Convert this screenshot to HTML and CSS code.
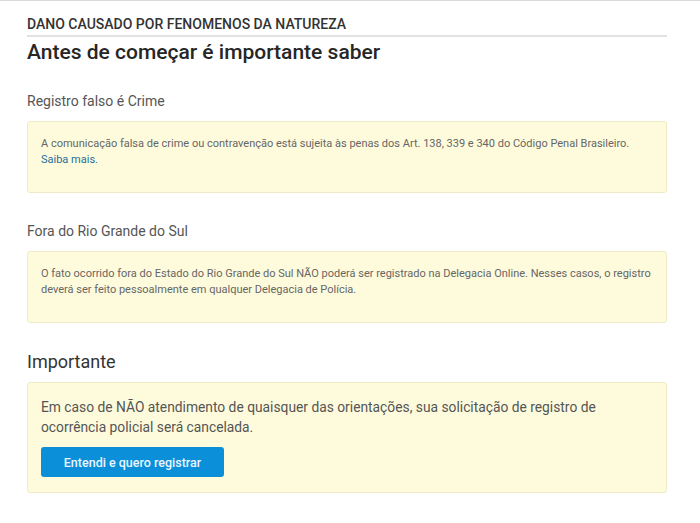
FILE: index.html
```html
<!DOCTYPE html>
<html lang="pt-BR">
<head>
<meta charset="utf-8">
<title>Dano causado por fenomenos da natureza</title>
<link rel="stylesheet" href="styles.css">
</head>
<body>
<div class="page">
  <div class="topbar"></div>
  <main class="content">
    <h2 class="kicker">DANO CAUSADO POR FENOMENOS DA NATUREZA</h2>
    <h1 class="title">Antes de começar é importante saber</h1>

    <section class="section">
      <h3 class="section-title">Registro falso é Crime</h3>
      <div class="notice small">
        <p>A comunicação falsa de crime ou contravenção está sujeita às penas dos Art. 138, 339 e 340 do Código Penal Brasileiro.<br><a class="link" href="#">Saiba mais.</a></p>
      </div>
    </section>

    <section class="section">
      <h3 class="section-title">Fora do Rio Grande do Sul</h3>
      <div class="notice small">
        <p>O fato ocorrido fora do Estado do Rio Grande do Sul NÃO poderá ser registrado na Delegacia Online. Nesses casos, o registro deverá ser feito pessoalmente em qualquer Delegacia de Polícia.</p>
      </div>
    </section>

    <section class="section section-important">
      <h3 class="section-title big">Importante</h3>
      <div class="notice large">
        <p>Em caso de NÃO atendimento de quaisquer das orientações, sua solicitação de registro de ocorrência policial será cancelada.</p>
        <button class="btn" type="button">Entendi e quero registrar</button>
      </div>
    </section>
  </main>
</div>
</body>
</html>
```
FILE: styles.css
```css
* { box-sizing: border-box; }
html, body {
  margin: 0;
  padding: 0;
  background: #ffffff;
}
body {
  font-family: Roboto, "Liberation Sans", Arial, sans-serif;
  color: #333;
}
.page {
  width: 700px;
  min-height: 523px;
}
.topbar {
  height: 1px;
  background: #d9d9d9;
}
.content {
  padding: 14px 33px 0 27px;
}
.kicker {
  margin: 0;
  font-size: 14px;
  line-height: 18px;
  font-weight: 500;
  color: #333;
  padding-bottom: 2px;
  border-bottom: 2px solid #e2e2e2;
}
.title {
  margin: 3px 0 0;
  font-size: 21px;
  line-height: 25px;
  font-weight: 500;
  color: #262626;
}
.section {
  margin-top: 26px;
}
.section + .section {
  margin-top: 28px;
}
.section-title {
  margin: 0 0 10px;
  font-size: 14px;
  line-height: 20px;
  font-weight: 400;
  color: #555;
}
.section-title.big {
  font-size: 18px;
  line-height: 22px;
  margin-bottom: 9px;
  color: #333;
}
.notice {
  background: #fefbdc;
  border: 1px solid #efebc6;
  border-radius: 3px;
}
.notice p {
  margin: 0;
}
.notice.small {
  padding: 14px 13px 24px;
  font-size: 11px;
  line-height: 16px;
  color: #666;
  font-weight: 400;
}
.notice.large {
  padding: 14px 13px 15px;
  font-size: 13.8px;
  line-height: 20px;
  color: #555;
}
.link {
  color: #1f6e9c;
  text-decoration: none;
}
.btn {
  display: block;
  margin-top: 10px;
  width: 183px;
  height: 30px;
  border: none;
  border-radius: 3px;
  background: #0b8fd9;
  color: #eaf6ff;
  font-family: Roboto, "Liberation Sans", Arial, sans-serif;
  font-size: 12.5px;
  font-weight: 500;
  cursor: pointer;
  padding: 0;
}
```
